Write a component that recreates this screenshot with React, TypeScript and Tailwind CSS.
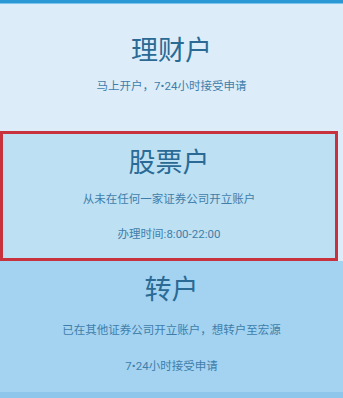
import React from "react";

const font = { fontFamily: 'Roboto, "Noto Sans CJK SC", "Noto Sans", sans-serif' };

const App: React.FC = () => {
  return (
    <div className="w-[343px] h-[398px] flex flex-col bg-[#dcedf9] overflow-hidden" style={font}>
      {/* top bar */}
      <div className="h-[3px] bg-[#2b98d6]" />
      <div className="h-[1px] bg-[#7cc6ee]" />

      {/* 理财户 */}
      <div className="h-[127px] flex flex-col items-center bg-[#dcedf9] pt-[30px]">
        <span className="text-[27px] leading-[34px] text-[#2a6a94]">理财户</span>
        <span className="mt-[10px] text-[11.5px] leading-[16px] text-[#3f7eaa]">马上开户，7•24小时接受申请</span>
      </div>

      {/* 股票户 (selected) */}
      <div className="h-[130px] mr-[5px] border-[3px] border-[#c8323d] bg-[#bee0f3] flex flex-col items-center pt-[12px]">
        <span className="text-[27px] leading-[34px] text-[#2a6a94]">股票户</span>
        <span className="mt-[11px] text-[11.5px] leading-[16px] text-[#3f7eaa]">从未在任何一家证券公司开立账户</span>
        <span className="mt-[19px] text-[11.5px] leading-[16px] text-[#3f7eaa]">办理时间:8:00-22:00</span>
      </div>

      {/* 转户 */}
      <div className="h-[131px] flex flex-col items-center bg-[#a3d3f1] pt-[12px]">
        <span className="text-[27px] leading-[34px] text-[#2a6a94]">转户</span>
        <span className="mt-[15px] text-[11.5px] leading-[16px] text-[#3f7eaa]">已在其他证券公司开立账户，想转户至宏源</span>
        <span className="mt-[20px] text-[11.5px] leading-[16px] text-[#3f7eaa]">7•24小时接受申请</span>
      </div>
      <div className="flex-1 bg-[#8dc6ea]" />
    </div>
  );
};

export default App;
